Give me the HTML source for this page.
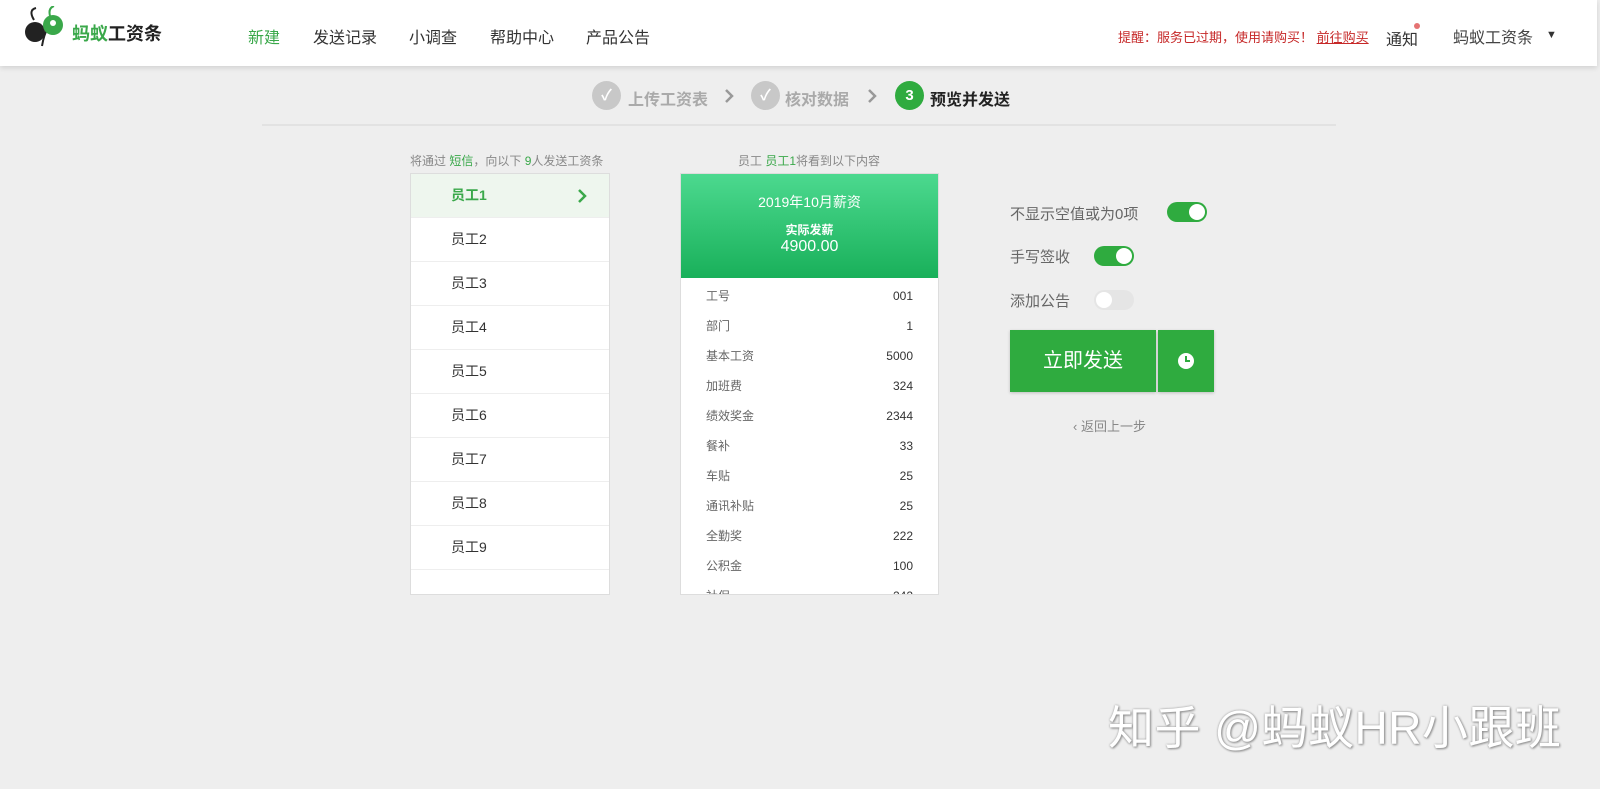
<!DOCTYPE html>
<html><head><meta charset="utf-8"><style>
*{margin:0;padding:0;box-sizing:border-box}
body{width:1600px;height:789px;background:#eeeeee;font-family:"Liberation Sans","Noto Sans CJK SC",sans-serif;position:relative;overflow:hidden;color:#333}
.hdr{position:absolute;left:0;top:0;width:1597px;height:66px;background:#fff;box-shadow:0 2px 5px rgba(0,0,0,.12)}
.a{position:absolute;white-space:nowrap}
.nav{font-size:16px;top:24px;color:#333}
.step{position:absolute;top:81px;width:29px;height:29px;border-radius:50%;background:#c8c8c8;color:#fff;text-align:center;line-height:29px;font-size:15px;font-weight:bold}
.st{top:86px;font-size:16px;font-weight:bold;color:#aaa}
.list{position:absolute;left:410px;top:173px;width:200px;height:422px;background:#fff;border:1px solid #ddd}
.row{height:44px;border-bottom:1px solid #eee;padding-left:40px;line-height:43px;font-size:14px;color:#333}
.card{position:absolute;left:680px;top:173px;width:259px;height:422px;background:#fff;border:1px solid #ddd;overflow:hidden}
.ch{height:104px;background:linear-gradient(#4cd98f,#19b05a);color:#fff;text-align:center}
.it{display:flex;justify-content:space-between;padding:0 25px;height:30px;line-height:30px;font-size:12px;color:#666}
.it b{font-weight:normal;color:#333}
.tog{position:absolute;width:40px;height:20px;border-radius:10px;background:#2fab3f}
.tog i{position:absolute;top:2px;right:2px;width:16px;height:16px;border-radius:50%;background:#fff}
.tog.off{background:#e5e5e5}.tog.off i{left:2px;right:auto}
.lbl{font-size:15px;color:#666}
</style></head><body>
<div class="hdr">
  <svg class="a" style="left:24px;top:6px" width="48" height="42" viewBox="0 0 48 42">
    <path d="M10 14 Q4 4 12 2" stroke="#222" stroke-width="2" fill="none"/>
    <path d="M26 10 Q24 2 30 0" stroke="#3aa84a" stroke-width="2" fill="none"/>
    <circle cx="11" cy="26" r="10" fill="#222"/>
    <path d="M18 40 Q20 28 24 22" stroke="#222" stroke-width="2" fill="none"/>
    <circle cx="29" cy="19" r="10" fill="#3aa84a"/>
    <circle cx="29" cy="17" r="3" fill="#fff"/>
  </svg>
  <div class="a" style="left:72px;top:20px;font-size:18px;font-weight:bold"><span style="color:#3aa84a">蚂蚁</span><span style="color:#222">工资条</span></div>
  <div class="a nav" style="left:248px;color:#3aa84a">新建</div>
  <div class="a nav" style="left:313px">发送记录</div>
  <div class="a nav" style="left:409px">小调查</div>
  <div class="a nav" style="left:490px">帮助中心</div>
  <div class="a nav" style="left:586px">产品公告</div>
  <div class="a" style="left:1118px;top:27px;font-size:13px;color:#c62828">提醒：服务已过期，使用请购买！ <u>前往购买</u></div>
  <div class="a" style="left:1386px;top:26px;font-size:16px">通知</div>
  <div class="a" style="left:1414px;top:23px;width:6px;height:6px;border-radius:50%;background:#e57373"></div>
  <div class="a" style="left:1453px;top:24px;font-size:16px;color:#444">蚂蚁工资条</div>
  <div class="a" style="left:1546px;top:29px;font-size:11px;color:#333">▼</div>
</div>
<div class="step" style="left:592px">✓</div><div class="a st" style="left:628px">上传工资表</div>
<svg class="a" style="left:724px;top:89px" width="10" height="14" viewBox="0 0 10 14"><path d="M2 1l6 6-6 6" stroke="#999" stroke-width="2.5" fill="none"/></svg>
<div class="step" style="left:751px">✓</div><div class="a st" style="left:785px">核对数据</div>
<svg class="a" style="left:867px;top:89px" width="10" height="14" viewBox="0 0 10 14"><path d="M2 1l6 6-6 6" stroke="#999" stroke-width="2.5" fill="none"/></svg>
<div class="step" style="left:895px;background:#2fab3f">3</div><div class="a st" style="left:930px;color:#222">预览并发送</div>
<div class="a" style="left:262px;top:124px;width:1074px;height:2px;background:#e2e2e2"></div>

<div class="a" style="left:410px;top:152px;font-size:12px;color:#888">将通过 <span style="color:#3aa84a">短信</span>，向以下 <span style="color:#3aa84a">9</span>人发送工资条</div>
<div class="list">
  <div class="row" style="background:#eef6ee;color:#3aa84a;font-weight:bold;position:relative">员工1<svg style="position:absolute;right:22px;top:15px" width="10" height="14" viewBox="0 0 10 14"><path d="M2 1l6 6-6 6" stroke="#3aa84a" stroke-width="2.5" fill="none"/></svg></div>
  <div class="row">员工2</div><div class="row">员工3</div><div class="row">员工4</div><div class="row">员工5</div>
  <div class="row">员工6</div><div class="row">员工7</div><div class="row">员工8</div><div class="row">员工9</div>
</div>

<div class="a" style="left:738px;top:152px;font-size:12px;color:#888">员工 <span style="color:#3aa84a">员工1</span>将看到以下内容</div>
<div class="card">
  <div class="ch"><div style="padding-top:18px;font-size:14px">2019年10月薪资</div><div style="padding-top:9px;font-size:12px;font-weight:bold">实际发薪</div><div style="font-size:16px">4900.00</div></div>
  <div style="padding-top:3px">
  <div class="it">工号<b>001</b></div><div class="it">部门<b>1</b></div><div class="it">基本工资<b>5000</b></div>
  <div class="it">加班费<b>324</b></div><div class="it">绩效奖金<b>2344</b></div><div class="it">餐补<b>33</b></div>
  <div class="it">车贴<b>25</b></div><div class="it">通讯补贴<b>25</b></div><div class="it">全勤奖<b>222</b></div>
  <div class="it">公积金<b>100</b></div><div class="it">社保<b>242</b></div>
  </div>
</div>

<div class="a lbl" style="left:1010px;top:203px">不显示空值或为0项</div><div class="tog" style="left:1167px;top:202px"><i></i></div>
<div class="a lbl" style="left:1010px;top:246px">手写签收</div><div class="tog" style="left:1094px;top:246px"><i></i></div>
<div class="a lbl" style="left:1010px;top:290px">添加公告</div><div class="tog off" style="left:1094px;top:290px"><i></i></div>
<div class="a" style="left:1010px;top:330px;width:146px;height:62px;background:#2fab3f;color:#fff;font-size:20px;text-align:center;line-height:62px;box-shadow:0 1px 3px rgba(0,0,0,.2)">立即发送</div>
<div class="a" style="left:1158px;top:330px;width:56px;height:62px;background:#2fab3f;box-shadow:0 1px 3px rgba(0,0,0,.2)">
  <svg style="position:absolute;left:19px;top:22px" width="18" height="18" viewBox="0 0 18 18"><circle cx="9" cy="9" r="8" fill="#fff"/><path d="M9 4v5h4" stroke="#2fab3f" stroke-width="2" fill="none"/></svg>
</div>
<div class="a" style="left:1073px;top:416px;font-size:13px;color:#888">‹ 返回上一步</div>

<div class="a" style="left:1108px;top:692px;font-size:46px;color:#fff;text-shadow:0 0 2px #999,1px 1px 2px #888;letter-spacing:0.5px">知乎 @蚂蚁HR小跟班</div>
</body></html>
